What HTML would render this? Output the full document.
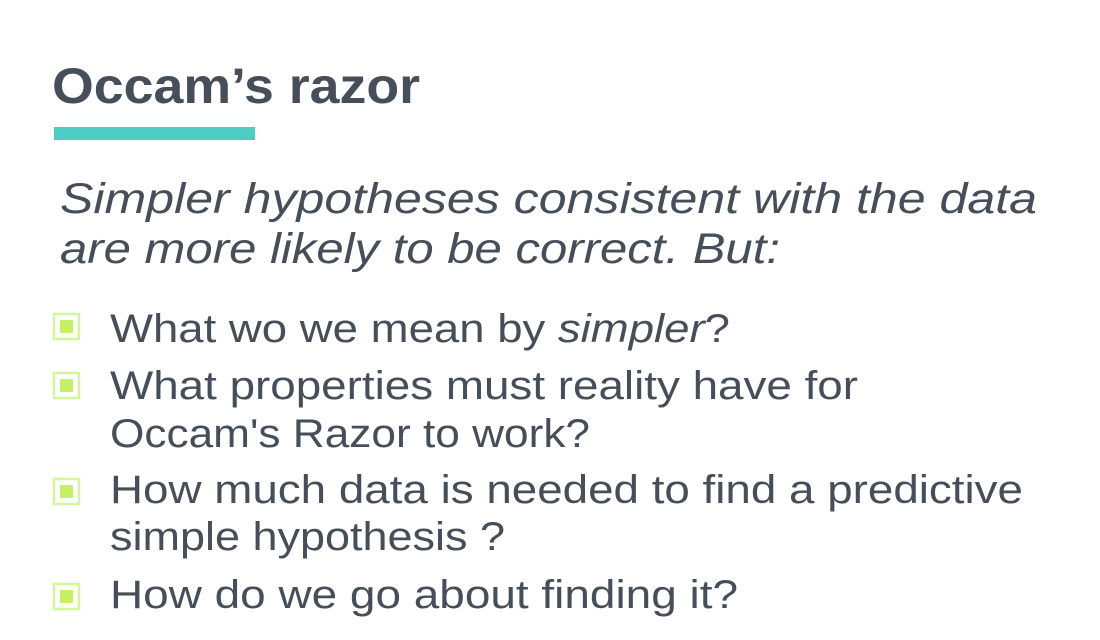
<!DOCTYPE html>
<html><head><meta charset="utf-8"><style>
html,body{margin:0;padding:0;background:#fff;width:1100px;height:640px;overflow:hidden}
svg{display:block}
text{font-family:"Liberation Sans",sans-serif;fill:#464e5a}
</style></head><body>
<svg width="1100" height="640" viewBox="0 0 1100 640">
<text x="52" y="103" font-size="50" font-weight="bold" textLength="368" lengthAdjust="spacingAndGlyphs">Occam’s razor</text>
<rect x="54" y="127" width="201" height="13" fill="#4ecdc4"/>
<g font-style="italic" font-size="43">
<text x="60" y="213" textLength="977" lengthAdjust="spacingAndGlyphs" font-style="italic">Simpler hypotheses consistent with the data</text>
<text x="60" y="263" textLength="720" lengthAdjust="spacingAndGlyphs" font-style="italic">are more likely to be correct. But:</text>
</g>
<g>
<rect x="54" y="314" width="25" height="25" fill="none" stroke="#d2f79a" stroke-width="2.5"/><rect x="60" y="320" width="13" height="13" fill="#c6f063"/>
<rect x="54" y="373" width="25" height="25" fill="none" stroke="#d2f79a" stroke-width="2.5"/><rect x="60" y="379" width="13" height="13" fill="#c6f063"/>
<rect x="54" y="479" width="25" height="25" fill="none" stroke="#d2f79a" stroke-width="2.5"/><rect x="60" y="485" width="13" height="13" fill="#c6f063"/>
<rect x="54" y="584" width="25" height="25" fill="none" stroke="#d2f79a" stroke-width="2.5"/><rect x="60" y="590" width="13" height="13" fill="#c6f063"/>
</g>
<g font-size="40">
<text x="110" y="342" textLength="620" lengthAdjust="spacingAndGlyphs">What wo we mean by <tspan font-style="italic">simpler</tspan>?</text>
<text x="110" y="399" textLength="748" lengthAdjust="spacingAndGlyphs">What properties must reality have for</text>
<text x="110" y="447" textLength="480" lengthAdjust="spacingAndGlyphs">Occam's Razor to work?</text>
<text x="110" y="503" textLength="913" lengthAdjust="spacingAndGlyphs">How much data is needed to find a predictive</text>
<text x="110" y="550" textLength="395" lengthAdjust="spacingAndGlyphs">simple hypothesis ?</text>
<text x="110" y="608" textLength="628" lengthAdjust="spacingAndGlyphs">How do we go about finding it?</text>
</g>
</svg>
</body></html>
